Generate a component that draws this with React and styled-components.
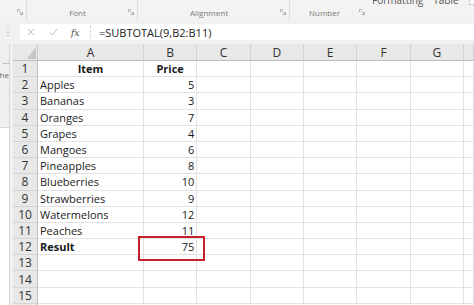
import React from 'react'
import styled, { createGlobalStyle } from 'styled-components'

const GlobalStyle = createGlobalStyle`
  html, body { margin: 0; padding: 0; background: #fff; }
  body { font-family: "Open Sans", "Noto Sans", sans-serif; }
  * { box-sizing: border-box; }
`

const Page = styled.div`
  width: 474px;
  height: 305px;
  overflow: hidden;
  background: #f1f1f1;
  display: flex;
  flex-direction: column;
`

const Ribbon = styled.div`
  height: 21px;
  flex-shrink: 0;
  display: flex;
  background: #f3f3f3;
`

const Group = styled.div`
  width: ${p => p.$w}px;
  flex-shrink: 0;
  display: flex;
  align-items: center;
  padding-top: 3px;
  border-right: ${p => (p.$last ? 'none' : '1px solid #dcdcdc')};
`

const GroupLabel = styled.span`
  flex: 1;
  text-align: center;
  font-size: 8px;
  color: #7a7a7a;
`

const Launcher = styled.svg`
  width: 6px;
  height: 6px;
  margin-right: 3px;
  flex-shrink: 0;
`

const StylesGroup = styled.div`
  flex: 1;
  display: flex;
  align-items: flex-start;
  gap: 10px;
  padding-left: 4px;
`

const CutLabel = styled.span`
  font-size: 10px;
  color: #555;
  line-height: 10px;
  margin-top: -5px;
`

const StyleBox = styled.div`
  margin-left: auto;
  width: 22px;
  height: 5px;
  background: #fff;
  border: 1px solid #cfcfcf;
  border-top: none;
`

const FormulaBar = styled.div`
  height: 23px;
  flex-shrink: 0;
  display: flex;
  align-items: flex-start;
  padding-top: 3px;
`

const Handle = styled.div`
  width: 20px;
  height: 16px;
  display: flex;
  align-items: center;
  justify-content: center;
  padding-right: 4px;
`

const FormulaInput = styled.div`
  flex: 1;
  height: 16px;
  background: #fff;
  display: flex;
  align-items: center;
`

const IconSlot = styled.div`
  width: 22px;
  height: 16px;
  display: flex;
  align-items: center;
  justify-content: center;
`

const Fx = styled.span`
  font-family: "DejaVu Serif", "Liberation Serif", serif;
  font-style: italic;
  font-size: 10px;
  color: #555;
  letter-spacing: -0.5px;
`

const BarDivider = styled.div`
  width: 1px;
  height: 12px;
  margin-left: 4px;
  border-left: 1px dotted #c8c8c8;
`

const FormulaText = styled.span`
  margin-left: 8px;
  font-size: 11px;
  color: #222;
`

const Body = styled.div`
  flex: 1;
  display: flex;
  gap: 3px;
  min-height: 0;
`

const SidePane = styled.div`
  width: 10px;
  display: flex;
  flex-direction: column;
`

const SideTop = styled.div`
  height: 84px;
  background: #efefef;
  border-right: 1px solid #d6d6d6;
  border-bottom: 1px solid #d6d6d6;
  display: flex;
  flex-direction: column;
  padding-top: 12px;
  gap: 5px;
  overflow: hidden;
`

const SideText = styled.div`
  font-size: 8px;
  color: #666;
  white-space: nowrap;
  display: flex;
  justify-content: flex-end;
  line-height: 9px;
`

const SideBottom = styled.div`
  flex: 1;
  background: #fff;
  border-right: 1px solid #d6d6d6;
`

const SheetWrap = styled.div`
  flex: 1;
  position: relative;
  overflow: hidden;
`

const Sheet = styled.div`
  display: grid;
  grid-template-columns: 25px 106px repeat(6, 53.33px) 1fr;
  grid-template-rows: 17px;
  grid-auto-rows: 16.2px;
`

const Corner = styled.div`
  background: #e8e8e8;
  border-right: 1px solid #c9c9c9;
  border-bottom: 1px solid #bdbdbd;
  position: relative;
`

const ColHead = styled.div`
  background: #e8e8e8;
  border-right: 1px solid #d2d2d2;
  border-bottom: 1px solid #bdbdbd;
  display: flex;
  align-items: center;
  justify-content: center;
  font-size: 12px;
  color: #333;
`

const RowHead = styled.div`
  background: #e8e8e8;
  border-right: 1px solid #c2c2c2;
  border-bottom: 1px solid #d6d6d6;
  display: flex;
  align-items: center;
  justify-content: center;
  font-size: 12px;
  color: #333;
`

const Cell = styled.div`
  background: #fff;
  border-right: 1px solid #e2e2e2;
  border-bottom: 1px solid #e2e2e2;
  display: flex;
  align-items: center;
  justify-content: ${p => (p.$align === 'right' ? 'flex-end' : p.$align === 'center' ? 'center' : 'flex-start')};
  padding: 0 2px;
  font-size: 11px;
  font-weight: ${p => (p.$bold ? 700 : 400)};
  color: #1a1a1a;
  white-space: nowrap;
`

const Highlight = styled.div`
  position: absolute;
  left: 125px;
  top: 192px;
  width: 67px;
  height: 25px;
  border: 2px solid #c8202b;
  pointer-events: none;
`

const columns = ['A', 'B', 'C', 'D', 'E', 'F', 'G', '']

const rows = [
  { a: 'Item', b: 'Price', head: true },
  { a: 'Apples', b: '5' },
  { a: 'Bananas', b: '3' },
  { a: 'Oranges', b: '7' },
  { a: 'Grapes', b: '4' },
  { a: 'Mangoes', b: '6' },
  { a: 'Pineapples', b: '8' },
  { a: 'Blueberries', b: '10' },
  { a: 'Strawberries', b: '9' },
  { a: 'Watermelons', b: '12' },
  { a: 'Peaches', b: '11' },
  { a: 'Result', b: '75', total: true },
  { a: '', b: '' },
  { a: '', b: '' },
  { a: '', b: '' },
  { a: '', b: '' },
]

function LauncherIcon() {
  return (
    <Launcher viewBox="0 0 6 6">
      <path d="M0.5 3V0.5H3M2 2L5.5 5.5M5.5 3V5.5H3" fill="none" stroke="#a0a0a0" strokeWidth="0.8" />
    </Launcher>
  )
}

function App() {
  return (
    <Page>
      <GlobalStyle />
      <Ribbon>
        <Group $w={27}><GroupLabel /><LauncherIcon /></Group>
        <Group $w={111}><GroupLabel>Font</GroupLabel><LauncherIcon /></Group>
        <Group $w={152}><GroupLabel>Alignment</GroupLabel><LauncherIcon /></Group>
        <Group $w={78} $last><GroupLabel>Number</GroupLabel><LauncherIcon /></Group>
        <StylesGroup>
          <CutLabel>Formatting</CutLabel>
          <CutLabel>Table</CutLabel>
          <StyleBox />
        </StylesGroup>
      </Ribbon>

      <FormulaBar>
        <Handle>
          <svg width="2" height="9" viewBox="0 0 2 9">
            <circle cx="1" cy="1" r="0.7" fill="#aaa" />
            <circle cx="1" cy="4.5" r="0.7" fill="#aaa" />
            <circle cx="1" cy="8" r="0.7" fill="#aaa" />
          </svg>
        </Handle>
        <FormulaInput>
          <IconSlot>
            <svg width="8" height="8" viewBox="0 0 8 8">
              <path d="M1 1L7 7M7 1L1 7" stroke="#b8b8b8" strokeWidth="0.9" fill="none" />
            </svg>
          </IconSlot>
          <IconSlot>
            <svg width="9" height="8" viewBox="0 0 9 8">
              <path d="M1 4.5L3.3 7L8 1" stroke="#b8b8b8" strokeWidth="0.9" fill="none" />
            </svg>
          </IconSlot>
          <IconSlot><Fx>fx</Fx></IconSlot>
          <BarDivider />
          <FormulaText>=SUBTOTAL(9,B2:B11)</FormulaText>
        </FormulaInput>
      </FormulaBar>

      <Body>
        <SidePane>
          <SideTop>
            <SideText>...</SideText>
            <SideText>Cache</SideText>
          </SideTop>
          <SideBottom />
        </SidePane>
        <SheetWrap>
          <Sheet>
            <Corner>
              <svg width="25" height="17" viewBox="0 0 25 17" style={{ position: 'absolute', left: 0, top: 0 }}>
                <polygon points="23,3 23,15 14,15" fill="#c6c6c6" />
              </svg>
            </Corner>
            {columns.map((c, i) => <ColHead key={i}>{c}</ColHead>)}
            {rows.map((r, i) => (
              <React.Fragment key={i}>
                <RowHead>{i + 1}</RowHead>
                <Cell $align={r.head ? 'center' : 'left'} $bold={r.head || r.total}>{r.a}</Cell>
                <Cell $align={r.head ? 'center' : 'right'} $bold={r.head}>{r.b}</Cell>
                {columns.slice(2).map((c, j) => <Cell key={j} />)}
              </React.Fragment>
            ))}
          </Sheet>
          <Highlight />
        </SheetWrap>
      </Body>
    </Page>
  )
}

export default App
